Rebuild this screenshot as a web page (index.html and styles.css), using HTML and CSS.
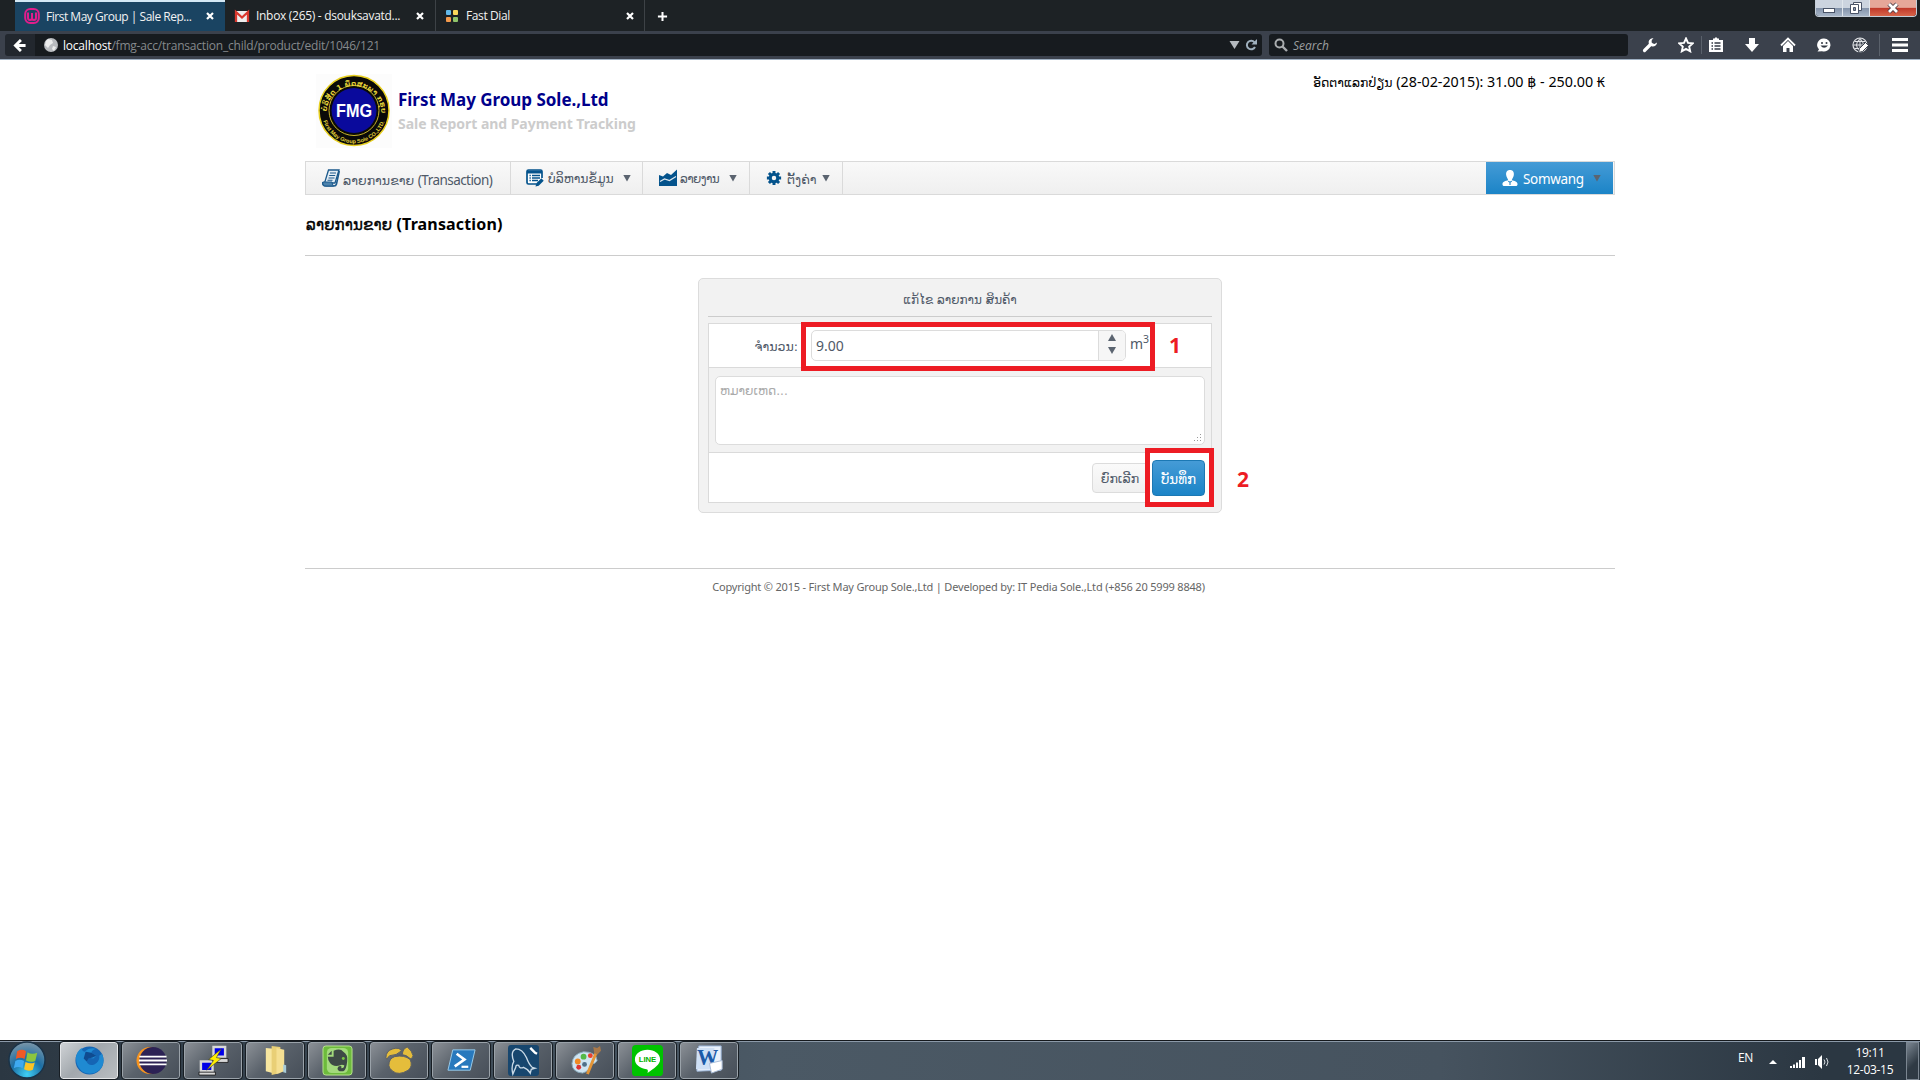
FILE: index.html
```
<!DOCTYPE html>
<html lang="lo">
<head>
<meta charset="utf-8">
<title>First May Group | Sale Report</title>
<link rel="stylesheet" href="styles.css">
</head>
<body>
<header class="browser">
  <div class="tabs">
    <div class="tab tab-active">
      <svg class="favicon" viewBox="0 0 16 16"><rect x="1.2" y="1" width="13.6" height="14" rx="5" fill="none" stroke="#e01e8c" stroke-width="2"/><path d="M4 4.500V10q0 2 2 2 2 0 2-2V5v5q0 2 2 2 2 0 2-2V4.500" fill="none" stroke="#e01e8c" stroke-width="2"/></svg>
      <span class="tab-title t1">First May Group | Sale Rep...</span>
      <svg class="close" viewBox="0 0 8 8"><path d="M1 1l6 6M7 1L1 7" stroke="#fff" stroke-width="2.200"/></svg>
    </div>
    <div class="tab tab-mail">
      <svg class="favicon" viewBox="0 0 16 16"><rect x="1" y="3" width="14" height="11" fill="#eee"/><path d="M2 14V4l6 5.500L14 4v10" fill="none" stroke="#d9382e" stroke-width="2.300"/></svg>
      <span class="tab-title t2">Inbox (265) - dsouksavatd...</span>
      <svg class="close" viewBox="0 0 8 8"><path d="M1 1l6 6M7 1L1 7" stroke="#fff" stroke-width="2.200"/></svg>
    </div>
    <div class="tab tab-dial">
      <svg class="favicon" viewBox="0 0 16 16"><rect x="2" y="2" width="5" height="5" rx="1" fill="#62b8e8"/><rect x="9" y="2" width="5" height="5" rx="1" fill="#fbd85b"/><rect x="2" y="9" width="5" height="5" rx="1" fill="#f49a4c"/><rect x="9" y="9" width="5" height="5" rx="1" fill="#8fc46a"/></svg>
      <span class="tab-title t3">Fast Dial</span>
      <svg class="close" viewBox="0 0 8 8"><path d="M1 1l6 6M7 1L1 7" stroke="#fff" stroke-width="2.200"/></svg>
    </div>
    <svg class="newtab" viewBox="0 0 12 12"><path d="M6 1v10M1 6h10" stroke="#fff" stroke-width="2.200"/></svg>
    <div class="winbtns">
      <span class="wb wb-min"><svg viewBox="0 0 14 12"><rect x="1.500" y="6.500" width="11" height="4" fill="#fff" stroke="#4a5468"/></svg></span>
      <span class="wb wb-max"><svg viewBox="0 0 14 12"><path d="M4.500.5h8v8h-8z" fill="#fff" stroke="#4a5468"/><path d="M1.500 2.500h8v9h-8z" fill="#fff" stroke="#4a5468"/><path d="M4.500 5.500h2v3h-2z" fill="#8996ad" stroke="#4a5468"/></svg></span>
      <span class="wb wb-close"><svg viewBox="0 0 14 12"><path d="M3 2l8 8M11 2l-8 8" stroke="#4a3b45" stroke-width="4.500"/><path d="M3 2l8 8M11 2l-8 8" stroke="#fff" stroke-width="2.800"/></svg></span>
    </div>
  </div>
  <div class="toolbar">
    <div class="back"><svg viewBox="0 0 14 14"><path d="M8 1L2 7l6 6M2.500 7H13" fill="none" stroke="#fff" stroke-width="3"/></svg></div>
    <div class="url">
      <svg class="globe" viewBox="0 0 16 16"><circle cx="8" cy="8" r="7" fill="#b9bcc0"/><path d="M5 2l4 1 1 3-3 2-2 3-3-3 1-4zM10 9l3 1-2 4-2-2z" fill="#eceded"/></svg>
      <span class="url-text"><b>localhost</b>/fmg-acc/transaction_child/product/edit/1046/121</span>
      <svg class="drop" viewBox="0 0 10 8"><path d="M0 0h10L5 8z" fill="#b4b9be"/></svg>
      <svg class="reload" viewBox="0 0 12 12"><path d="M9.500 3.300A4.300 4.300 0 1 0 10 8" fill="none" stroke="#9fb0be" stroke-width="2"/><path d="M12 0v5.500H6.500z" fill="#9fb0be"/></svg>
    </div>
    <div class="search">
      <svg viewBox="0 0 14 14"><circle cx="5.500" cy="5.500" r="4" fill="none" stroke="#a9acae" stroke-width="2"/><path d="M8.500 8.500L13 13" stroke="#a9acae" stroke-width="2.400"/></svg>
      <span>Search</span>
    </div>
    <div class="tools">
      <svg viewBox="0 0 16 16"><path d="M2.500 13.500L9 7" stroke="#fff" stroke-width="3.200" stroke-linecap="round"/><path d="M11.500 1.200A4.200 4.200 0 1 0 15 5.500L12.500 7 9.500 6 9.800 3z" fill="#fff"/></svg>
      <svg viewBox="0 0 16 16"><path d="M8 1.500l2 4.400 4.800.5-3.600 3.200 1 4.700L8 11.900l-4.200 2.400 1-4.700L1.200 6.400 6 5.900z" fill="none" stroke="#fff" stroke-width="1.900"/></svg>
      <i class="tsep"></i>
      <svg viewBox="0 0 16 16"><path d="M1 3h4V1.500h1.500L8 0l1.500 1.500H11V3h4v12H1z" fill="#fff"/><path d="M3.500 6h1.500M6.500 6h6M3.500 9h1.500M6.500 9h6M3.500 12h1.500M6.500 12h6" stroke="#343a44" stroke-width="1.300"/></svg>
      <svg viewBox="0 0 16 16"><path d="M5 1h6v6h4l-7 8-7-8h4z" fill="#fff"/></svg>
      <svg viewBox="0 0 16 16"><path d="M1 8.500L8 1.500l7 7" fill="none" stroke="#fff" stroke-width="1.800"/><path d="M3 9l5-5 5 5v6H9.500v-4h-3v4H3z" fill="#fff"/></svg>
      <svg viewBox="0 0 16 16"><path d="M8 1.500a6.500 6.500 0 1 1-2 12.700L1.500 14.500 3 12.500A6.500 6.500 0 0 1 8 1.500z" fill="#fff"/><circle cx="6" cy="6" r="1" fill="#343a44"/><circle cx="10.500" cy="6" r="1" fill="#343a44"/><path d="M4.500 8.500q3.500 4.500 7.500 0z" fill="#343a44"/></svg>
      <svg viewBox="0 0 16 16"><circle cx="8" cy="8" r="7" fill="none" stroke="#e3e5e8" stroke-width="1.200"/><path d="M1.500 8h13M8 1.500v13M3 4.500h10M3 11.500h8M8 1.500q-7 6.500 0 13M8 1.500q7 6.500 0 13" fill="none" stroke="#e3e5e8"/><path d="M6.500 15.500l1-4 6-6 3 3-6 6z" fill="#fff" stroke="#3b414c"/></svg>
      <i class="tsep tsep2"></i>
      <svg viewBox="0 0 16 16"><path d="M0 2.500h16M0 8h16M0 13.500h16" stroke="#fff" stroke-width="3.200"/></svg>
    </div>
  </div>
</header>

<main class="page">
  <div class="masthead">
    <svg class="logo" viewBox="0 0 76 74">
      <defs><path id="arcTop" d="M10.500 39.500A27.500 27.500 0 1 1 65.500 39.500"/><path id="arcBot" d="M7 46A32.300 32.300 0 0 0 69 46"/></defs>
      <rect width="76" height="74" fill="#fcfcfc"/>
      <circle cx="38" cy="36.500" r="35" fill="#0a0a08" stroke="#e8d020" stroke-width="1.500"/>
      <circle cx="38" cy="36.500" r="25" fill="#0a0a08" stroke="#c8b428" stroke-width="1"/>
      <circle cx="38" cy="36.500" r="22.500" fill="#0a0a9c"/>
      <text class="ring ring-top"><textPath href="#arcTop" startOffset="2" textLength="84">ບໍລິສັດ 1 ພຶດສະພາ ກຣຸບ</textPath></text>
      <text class="ring ring-bot"><textPath href="#arcBot" startOffset="1" textLength="80">First May Group Sole CO.,LTD.</textPath></text>
      <text class="fmg" x="20" y="42.500" textLength="36" lengthAdjust="spacingAndGlyphs">FMG</text>
    </svg>
    <div class="brand">
      <h1>First May Group Sole.,Ltd</h1>
      <p>Sale Report and Payment Tracking</p>
    </div>
    <div class="rate"><span class="lao">ອັດຕາແລກປ່ຽນ</span> (28-02-2015): 31.00 ฿ - 250.00 ₭</div>
  </div>

  <nav class="menu">
    <a class="item i1"><svg viewBox="0 0 18 18"><path d="M6.500 1H17l-4 13H2.500z" fill="#e4edf4" stroke="#1c5a8c" stroke-width="1.300"/><path d="M1 13q-1 4 3 4h8q2 0 2.500-2L17.300 2" fill="none" stroke="#1c5a8c" stroke-width="1.600"/><path d="M1 13h9q0 2 1.500 4H4q-4 0-3-4z" fill="#4d83ad" stroke="#1c5a8c"/><path d="M8 4h6M7.200 6.500h6M6.500 9h6M5.500 11.300h5" stroke="#1c5a8c" stroke-width="1.100"/></svg><span><span class="lao">ລາຍການຂາຍ</span> <span class="latin">(Transaction)</span></span></a>
    <a class="item i2"><svg viewBox="0 0 18 18"><path d="M16 9V2.500Q16 1 14.500 1H2.500Q1 1 1 2.500v11Q1 15 2.500 15H10" fill="#fff" stroke="#04538c" stroke-width="1.700"/><path d="M1 3h15" stroke="#04538c" stroke-width="3"/><path d="M3.500 6.500h1.300M6 6.500h8M3.500 9h1.300M6 9h8M3.500 11.500h1.300M6 11.500h6" stroke="#04538c" stroke-width="1.300"/><path d="M9.500 17.500l.8-3.200 5-5 2.400 2.400-5 5z" fill="#04538c"/></svg><span class="lao">ບໍລິຫານຂໍ້ມູນ</span><i class="caret"></i></a>
    <a class="item i3"><svg viewBox="0 0 18 18"><path d="M0 6l4 1.500 4-3.500 4 2 6-5.500V17H0z" fill="#04538c"/><path d="M1 12.500l4.500-2.500 5 1.500 6.500-4" fill="none" stroke="#dfe9f1" stroke-width="1.200"/></svg><span class="lao">ລາຍງານ</span><i class="caret"></i></a>
    <a class="item i4"><svg viewBox="0 0 18 18"><circle cx="9" cy="9" r="6" fill="#04538c"/><path d="M9 1v16M1 9h16M3.300 3.300l11.400 11.400M14.700 3.300L3.300 14.700" stroke="#04538c" stroke-width="3.300"/><circle cx="9" cy="9" r="2.500" fill="#f5f5f5"/></svg><span class="lao">ຕັ້ງຄ່າ</span><i class="caret"></i></a>
    <a class="user"><svg viewBox="0 0 18 18"><path d="M9 0c3.500 0 4.700 2.500 4.300 5.500C13 8 11.500 9.500 11 11.500c3 .5 6.500 1.500 6.500 4.500 0 1.500-1 2-2.500 2H3c-1.500 0-2.500-.5-2.500-2 0-3 3.500-4 6.500-4.500C6.500 9.500 5 8 4.700 5.500 4.300 2.500 5.500 0 9 0z" fill="#fff"/><path d="M7 12.500l2 1.300 2-1.300M9 14v3" stroke="#2f8bc8" stroke-width="1.300" fill="none"/></svg><span class="name">Somwang</span><i class="caret"></i></a>
  </nav>

  <h2 class="heading"><span class="lao">ລາຍການຂາຍ</span> (Transaction)</h2>

  <section class="panel">
    <div class="panel-title lao">ແກ້ໄຂ ລາຍການ ສິນຄ້າ</div>
    <div class="grid">
      <div class="row row1">
        <label class="lao">ຈຳນວນ:</label>
        <div class="number"><span>9.00</span><div class="spin"><i class="caret up"></i><i class="caret"></i></div></div>
        <span class="unit">m<sup>3</sup></span>
        <div class="mark mark1"></div><b class="num num1">1</b>
      </div>
      <div class="row row2">
        <div class="area"><span class="lao">ຫມາຍເຫດ...</span>
          <svg viewBox="0 0 8 8"><path d="M6 0h1v1H6zM3 3h1v1H3zM6 3h1v1H6zM0 6h1v1H0zM3 6h1v1H3zM6 6h1v1H6z" fill="#999"/></svg></div>
      </div>
      <div class="row row3">
        <span class="btn cancel lao">ຍົກເລີກ</span>
        <span class="btn save lao">ບັນທຶກ</span>
        <div class="mark mark2"></div><b class="num num2">2</b>
      </div>
    </div>
  </section>

  <footer class="foot"><span>Copyright © 2015 - First May Group Sole.,Ltd | Developed by: IT Pedia Sole.,Ltd (+856 20 5999 8848)</span></footer>
</main>

<div class="taskbar">
  <svg class="orb" viewBox="0 0 40 40">
    <defs><radialGradient id="orbG" cx=".5" cy=".9" r=".9"><stop offset="0" stop-color="#3fd0f5"/><stop offset=".5" stop-color="#1c6ea4"/><stop offset="1" stop-color="#7d97a8"/></radialGradient></defs>
    <circle cx="20" cy="19.500" r="18.500" fill="url(#orbG)" stroke="#1a3348" stroke-width="1.500"/>
    <path d="M10 10.500q5-3 9 0l-1.500 8q-4.500-2.500-9 0z" fill="#ef5a26"/><path d="M20.500 11.500q4.500 3 10 .5l-2 8.500q-5 2-9.500-.5z" fill="#8cc63e"/><path d="M8 20.500q4.500-2.500 9 0L15.500 28q-4.500-2.500-9 0z" fill="#3fa9f0"/><path d="M18.500 21.500q4.500 2.500 9.500.5l-2 7.500q-4.500 2-9-.5z" fill="#fcc425"/>
  </svg>
  <div class="apps">
    <div class="app app-active"><svg viewBox="0 0 32 32"><circle cx="16" cy="16" r="14.500" fill="#1565b4"/><path d="M2 13Q3 6 8 3q0 3 3 4 5-5 12-3-5 1-5 4l5 3-3 3q-6-2-7 3 2 5 8 3 6-3 5-9l3-2q4 10-3 17-9 7-18 1-6-5-6-14z" fill="#1f8ad2"/><path d="M12 7l6 1 5 3-4 2-4 1-2 3-3-3z" fill="#0f4b90"/></svg></div>
    <div class="app"><svg viewBox="0 0 32 32"><circle cx="14.500" cy="16" r="14" fill="#f7941e"/><circle cx="17.500" cy="16" r="14" fill="#2c2255"/><path d="M3.500 12h28M3 16h29M3.500 20h28" stroke="#fff" stroke-width="2"/></svg></div>
    <div class="app"><svg viewBox="0 0 32 32"><path d="M16 2h12v10H16zM3 17h12v10H3z" fill="#0000e8" stroke="#d8d8d8" stroke-width="2.500"/><path d="M14 14h17v4H16zM1 28h17v3H1z" fill="#d8d8d8" stroke="#111" stroke-width=".8"/><path d="M24 4L11 15l5 1-7 10 15-12-5-1z" fill="#ffee00" stroke="#333" stroke-width=".6"/></svg></div>
    <div class="app"><svg viewBox="0 0 32 32"><path d="M6 3l11 1v26L6 27z" fill="#f7e6a0"/><path d="M12 1l9 1v27l-9 2z" fill="#e9cf76"/><path d="M17 3l8 2v22l-8 3z" fill="#f5df92"/><path d="M24 20l3 1v8l-3-1z" fill="#a7cbd8"/></svg></div>
    <div class="app"><svg viewBox="0 0 32 32"><rect x="1" y="1" width="30" height="30" rx="3" fill="#6dbb3c" stroke="#b8e38f"/><rect x="5" y="3" width="22" height="26" rx="5" fill="#a3da7c"/><path d="M6 12h6V6q7-3 10 1 5 3 4 10-1 9-4 10-6 1-6-3 1-3 4-2v2q3 0 3-3-3-1-4 0-8 2-11-3-2-3-2-6z" fill="#3e4a46"/><path d="M6 10l4-4v4z" fill="#3e4a46"/><circle cx="22" cy="14" r="1.500" fill="#7ac943"/></svg></div>
    <div class="app"><svg viewBox="0 0 32 32"><path d="M5 21q0-7 6-9 10-2 16 3 3 7-2 11-10 6-16 1-4-3-4-6zM2 13q0-7 7-9 7-2 9 2-5 5-12 5-2 1-3 4zM19 10q0-6 5-8 5 4 6 9-1 4-3 3-4-4-8-4z" fill="#e5bd3b" stroke="#5b6066"/></svg></div>
    <div class="app"><svg viewBox="0 0 32 32"><path d="M7 5h23l-5 21H2z" fill="#2879bd" stroke="#9bcbe8"/><path d="M11 9l8 6-10 7" fill="none" stroke="#fff" stroke-width="2.800"/><path d="M16 22.500h7" stroke="#fff" stroke-width="2.300"/></svg></div>
    <div class="app"><svg viewBox="0 0 32 32"><rect width="32" height="32" rx="3" fill="#17466e"/><path d="M5 30Q3 22 6 17 2 7 8 4q7 0 11 9 3 8 6 10l3 1-4 1-1 4q-2-4-7-6-4 2-5-2-3-1-3 2z" fill="none" stroke="#c9d9e6" stroke-width="1.400"/><path d="M23 3l2 2 3 3 2 1" stroke="#fff" stroke-width="2.500"/></svg></div>
    <div class="app"><svg viewBox="0 0 32 32"><path d="M2 19Q3 9 14 7q13 0 14 9-1 3-6 4-2 7-9 9-11-1-11-10z" fill="#cfe4f2" stroke="#8ab"/><circle cx="8" cy="17" r="3" fill="#f08a24"/><circle cx="14" cy="12" r="3" fill="#54b948"/><circle cx="21" cy="11" r="2.500" fill="#e8422e"/><circle cx="9" cy="23" r="2.500" fill="#d33"/><circle cx="15" cy="20" r="2.500" fill="#4f6f88"/><path d="M18 30L27 8" stroke="#e39436" stroke-width="3"/><path d="M25 8l-1-6 4 1 3-2 1 5-4 4z" fill="#a8794a"/></svg></div>
    <div class="app"><svg viewBox="0 0 32 32"><rect width="32" height="32" rx="4" fill="#00c300"/><path d="M16 5c7 0 13 4 13 10 0 5-6 9-13 14 1-3 0-4-1-4C8 24 3 20 3 15 3 9 9 5 16 5z" fill="#fff"/><text class="line-txt" x="7" y="18" textLength="18">LINE</text></svg></div>
    <div class="app"><svg viewBox="0 0 32 32"><path d="M5 1l23 0v25L3 27z" fill="#e9f1fb" stroke="#9db8dc"/><path d="M3 3h18v22H2z" fill="#cfe0f5"/><text class="word-txt" x="3" y="21" textLength="22" lengthAdjust="spacingAndGlyphs">W</text><path d="M16 19l13-3v9l-11 4z" fill="#fff" stroke="#a8bcd8"/></svg></div>
  </div>
  <div class="tray">
    <span class="lang">EN</span>
    <svg class="tri" viewBox="0 0 8 4"><path d="M0 4l4-4 4 4z" fill="#fff"/></svg>
    <svg class="sig" viewBox="0 0 16 12"><path d="M0 10h2v2H0zM3 8.500h2V12H3zM6 6.500h2V12H6zM9 4h2v8H9zM12 1h3v11h-3z" fill="#fff"/></svg>
    <svg class="spk" viewBox="0 0 16 14"><path d="M1 4h2v6H1zM4 4l4-4v14l-4-4z" fill="#fff"/><path d="M10 4.500q2 2.500 0 5M12.500 3q3 4 0 8" fill="none" stroke="#dfe4e8"/></svg>
    <div class="clock"><span>19:11</span><span>12-03-15</span></div>
    <i class="peek"></i>
  </div>
</div>
</body>
</html>
```
FILE: styles.css
```
* { box-sizing: border-box; }
body {
  margin: 0; width: 1920px; height: 1080px; overflow: hidden;
  display: flex; flex-direction: column; background: #fff;
  font-family: "Noto Sans", "DejaVu Sans", sans-serif; font-size: 14px; color: #000;
}
svg { display: block; flex: none; }
h1, h2, p { margin: 0; }
.lao { font-family: "DejaVu Sans", sans-serif; }

.browser { height: 60px; flex: none; background: #3b414c; border-bottom: 1px solid #9fb0c2; font-family: "Open Sans", "Noto Sans", sans-serif; }
.tabs { height: 31px; display: flex; background: #1d2225; padding-left: 15px; align-items: stretch; }
.tab { width: 210px; display: flex; align-items: center; padding: 0 10px 0 9px; color: #f2f2f2; font-size: 12px; border-right: 1px solid #3d4246; }
.tab-active { background: #1a4462; border-top: 2px solid #d3e8f5; border-right: 0; padding-right: 11px; padding-bottom: 1px; }
.tab-mail { width: 211px; padding-right: 11px; }
.tab-dial { width: 209px; padding-left: 8px; }
.favicon { width: 16px; height: 16px; margin-right: 6px; }
.tab-title { flex: 1; white-space: nowrap; }
.t1 { letter-spacing: -0.48px; }
.t2 { letter-spacing: -0.3px; }
.t3 { letter-spacing: -0.4px; }
.close { width: 8px; height: 8px; }
.newtab { width: 11px; height: 11px; margin: 11px 0 0 12px; }
.winbtns { margin-left: auto; margin-right: 3px; display: flex; height: 17px; border: 1px solid #c5ced8; border-top: 0; border-radius: 0 0 4px 4px; overflow: hidden; }
.wb { width: 27px; display: flex; justify-content: center; align-items: center; border-right: 1px solid #e0e6ec; background: linear-gradient(#ccd4df 0 48%, #8494ab 52%, #a8b6c8); }
.wb svg { width: 14px; height: 12px; }
.wb-close { width: 46px; border: 0; background: linear-gradient(#e6a799 0 46%, #c0392a 52%, #d8654a); }
.toolbar { height: 28px; display: flex; align-items: center; padding: 0 11px 0 5px; }
.back { width: 30px; height: 22px; background: #22272e; border-radius: 3px 0 0 3px; display: flex; align-items: center; padding-left: 8px; }
.back svg { width: 14px; height: 13px; }
.url { width: 1227px; height: 22px; background: #171b1f; display: flex; align-items: center; padding: 0 5px 0 8px; border-radius: 0 3px 3px 0; }
.globe { width: 16px; height: 16px; margin-right: 4px; }
.url-text { flex: 1; color: #85898c; font-size: 12px; letter-spacing: -0.21px; }
.url-text b { color: #fff; font-weight: 400; }
.drop { width: 11px; height: 8px; margin-right: 5px; }
.reload { width: 12px; height: 12px; }
.search { width: 359px; height: 22px; margin-left: 7px; background: #171b1f; border-radius: 3px; display: flex; align-items: center; gap: 5px; padding-left: 5px; color: #9b9e9f; font-size: 12px; font-style: italic; }
.search svg { width: 14px; height: 14px; }
.tools { flex: 1; display: flex; align-items: center; gap: 20px; padding-left: 14px; }
.tools svg { width: 16px; height: 16px; }
.tsep { width: 1px; height: 18px; background: #5a616b; margin: 0 -14px 0 -13px; flex: none; }
.tsep2 { margin: 0 -8px 0 -9px; height: 22px; }

.page { flex: 1; width: 1310px; margin: 0 auto; display: flex; flex-direction: column; }
.masthead { height: 101px; display: flex; padding: 13px 10px 0 11px; align-items: flex-start; }
.logo { width: 76px; height: 74px; margin-top: 1px; }
.ring { fill: #e8d63a; font-weight: 700; }
.ring-top { font-family: "DejaVu Sans", sans-serif; font-size: 7px; }
.ring-bot { font-family: "Liberation Sans", sans-serif; font-size: 5.5px; }
.fmg { font-family: "Liberation Sans", sans-serif; font-weight: 700; font-size: 18px; fill: #fff; }
.brand { padding: 15px 0 0 6px; }
.brand h1 { font-size: 17px; line-height: 24px; color: #00008b; letter-spacing: -0.04px; }
.brand p { font-size: 14px; line-height: 24px; font-weight: 700; color: #ccc; letter-spacing: -0.04px; }
.rate { margin-left: auto; line-height: 18px; font-size: 14.3px; white-space: nowrap; }
.rate .lao { font-size: 12.400px; }

.menu { height: 34px; flex: none; display: flex; border: 1px solid #dadada; background: linear-gradient(#f9f9f9, #efefef); color: #4f5968; }
.item { display: flex; align-items: center; border-right: 1px solid #dadada; padding-left: 16px; white-space: nowrap; }
.item svg { width: 18px; height: 18px; margin-right: 3px; }
.item > span, .user > span { padding-top: 2px; }
.item .lao { font-size: 12.600px; }
.latin { font-size: 13.500px; letter-spacing: -0.55px; }
.i1 { width: 205px; } .i2 { width: 132px; padding-left: 15px; } .i3 { width: 107px; } .i4 { width: 93px; }
.item.i2 .lao { font-size: 12.300px; padding-left: 1px; }
.item.i3 .lao { font-size: 12px; letter-spacing: -0.6px; }
.i4 svg { width: 16px; height: 16px; margin-right: 5px; }
.caret { width: 8px; height: 7px; background: #5b6470; clip-path: polygon(0 0, 100% 0, 50% 100%); flex: none; }
.item .caret, .user .caret { margin-left: auto; margin-right: 12px; }
.i2 .caret { margin-right: 11px; }
.user { margin-left: auto; margin-right: 1px; width: 127px; display: flex; align-items: center; padding-left: 16px; color: #fff; background: linear-gradient(#459bd6, #1b84c7); }
.user svg { width: 16px; height: 18px; margin-right: 5px; }
.name { font-size: 13.500px; letter-spacing: -0.35px; }

.heading { font-size: 16px; line-height: 24px; margin: 17px 0 0; height: 44px; flex: none; border-bottom: 1px solid #ccc; padding-left: 1px; letter-spacing: 0.15px; }
.heading .lao { font-size: 15px; font-weight: 400; -webkit-text-stroke: .4px #000; }

.panel { width: 524px; height: 235px; flex: none; margin: 22px auto 0; background: #f2f2f2; border: 1px solid #dcdcdc; border-radius: 5px; padding: 0 9px; color: #4f5968; }
.panel-title { height: 38px; text-align: center; line-height: 42px; font-size: 12px; border-bottom: 1px solid #ccc; }
.grid { margin-top: 6px; border: 1px solid #dadada; height: 180px; }
.row { position: relative; display: flex; }
.row1 { height: 43px; background: #fff; padding-top: 6px; z-index: 1; }
.row1 label { width: 89px; text-align: right; line-height: 33px; font-size: 12.600px; }
.number { width: 315px; height: 31px; margin-left: 13px; border: 1px solid #dcdcdc; border-radius: 5px; display: flex; justify-content: space-between; padding-left: 4px; line-height: 30px; overflow: hidden; }
.spin { width: 27px; border-left: 1px solid #dcdcdc; background: #f6f6f6; display: flex; flex-direction: column; align-items: center; justify-content: center; gap: 6px; padding-bottom: 3px; }
.up { transform: scaleY(-1); }
.unit { margin-left: 4px; line-height: 27px; }
.unit sup { font-size: 10.500px; line-height: 0; }
.row2 { height: 86px; border-top: 1px solid #dadada; border-bottom: 1px solid #dadada; padding: 8px 6px 0; }
.area { width: 490px; height: 69px; background: #fff; border: 1px solid #dcdcdc; border-radius: 5px; padding: 4px; color: #aaa; font-size: 12.200px; position: relative; line-height: 20px; }
.area svg { position: absolute; right: 2px; bottom: 2px; width: 8px; height: 8px; }
.row3 { height: 49px; background: #fff; justify-content: flex-end; padding: 1px 6px 0 0; align-items: center; }
.btn { border: 1px solid #dcdcdc; border-radius: 4px; text-align: center; font-size: 12.600px; white-space: nowrap; }
.cancel { width: 58px; height: 30px; line-height: 29px; background: linear-gradient(#fafafa, #f0f0f0); margin-right: 2px; padding-right: 2px; }
.save { width: 53px; height: 36px; line-height: 36px; color: #fff; background: linear-gradient(#459bd6, #1b84c7); border-color: #1b78b4; font-size: 13.500px; }
.mark { position: absolute; border: 5px solid #ed1c24; }
.mark1 { left: 92px; top: -2px; width: 354px; height: 49px; }
.mark2 { left: 436px; top: -5px; width: 69px; height: 59px; }
.num { position: absolute; color: #ed1c24; font: 700 21px/24px "Open Sans", sans-serif; }
.num1 { left: 460px; top: 9px; }
.num2 { left: 528px; top: 14px; }
.foot { margin-top: 55px; border-top: 1px solid #ccc; text-align: center; font-size: 11px; line-height: 16px; padding: 10px 3px 0 0; color: #666; letter-spacing: -0.19px; white-space: nowrap; }

.taskbar { height: 40px; flex: none; display: flex; align-items: stretch; background: linear-gradient(90deg, #2b3742, #4b5965 40%, #46535f 75%, #2b3742 95%); border-top: 1px solid #15191d; color: #fff; box-shadow: inset 0 1px #8b99a8; }
.orb { width: 40px; height: 39px; margin-left: 7px; }
.apps { display: flex; gap: 4px; margin-left: 13px; padding-top: 1px; }
.app { width: 58px; height: 37px; border: 1px solid #9aa2a9; border-radius: 3px; outline: 1px solid #171d23; background: linear-gradient(135deg, #8b9096, #5a626b 45%, #474f59); display: flex; align-items: center; justify-content: center; }
.app-active { background: linear-gradient(135deg, #cfd2d5, #a2a8ad 45%, #b9bdc1); border-color: #e4e6e8; }
.app svg { width: 31px; height: 31px; }
.line-txt { font: 700 8px "Liberation Sans", sans-serif; fill: #00b300; }
.word-txt { font: 700 24px "Liberation Serif", serif; fill: #1c5ba8; }
.tray { margin-left: auto; display: flex; align-items: center; font: 12px "Open Sans", sans-serif; }
.lang { margin-right: 16px; margin-top: -7px; letter-spacing: -0.3px; }
.tri { width: 8px; height: 4px; margin: 3px 13px 0 0; }
.sig { width: 16px; height: 12px; margin: 3px 8px 0 0; }
.spk { width: 16px; height: 14px; margin: 3px 16px 0 0; }
.clock { width: 48px; display: flex; flex-direction: column; text-align: center; line-height: 17px; letter-spacing: -0.3px; margin-right: 12px; }
.peek { width: 13px; height: 38px; margin-right: 1px; border: 1px solid #7b8691; background: linear-gradient(135deg, #7b8691, #2f3a44 60%); }
```
